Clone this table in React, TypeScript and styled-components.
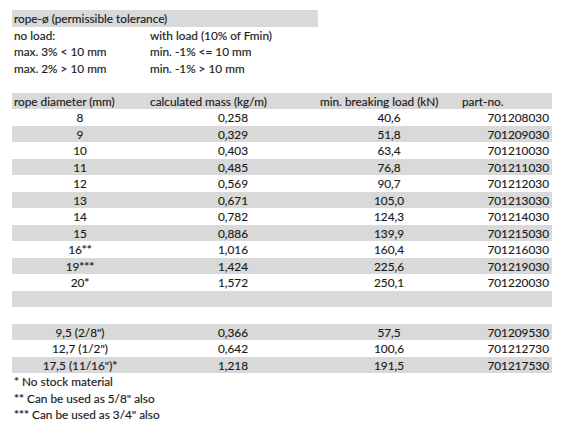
import React from "react";
import styled, { createGlobalStyle } from "styled-components";

const Global = createGlobalStyle`
  html, body { margin: 0; padding: 0; background: #ffffff; }
  body { font-family: Lato, "Open Sans", sans-serif; color: #1a1a1a; }
`;

const Sheet = styled.div`
  padding: 10px 0 0 12px;
  width: 540px;
  display: flex;
  flex-direction: column;
`;

const Row = styled.div<{ $shaded?: boolean; $half?: boolean }>`
  display: grid;
  grid-template-columns: 136px 170px 142px 92px;
  height: 16.5px;
  background: ${(p) => (p.$shaded ? "#d9d9d9" : "transparent")};
  width: ${(p) => (p.$half ? "306px" : "540px")};
`;

const Cell = styled.div<{ $align?: "left" | "center" | "right"; $span?: number }>`
  font-size: 11.8px;
  line-height: 16.5px;
  padding-top: 1px;
  white-space: nowrap;
  text-align: ${(p) => p.$align ?? "left"};
  padding-left: ${(p) => (p.$align === "right" || p.$align === "center" ? "0" : "2px")};
  padding-right: ${(p) => (p.$align === "right" ? "3px" : "0")};
  grid-column: ${(p) => (p.$span ? `span ${p.$span}` : "auto")};
  -webkit-text-stroke: 0.15px #1a1a1a;
`;

type Data = [string, string, string, string];

const main: Data[] = [
  ["8", "0,258", "40,6", "701208030"],
  ["9", "0,329", "51,8", "701209030"],
  ["10", "0,403", "63,4", "701210030"],
  ["11", "0,485", "76,8", "701211030"],
  ["12", "0,569", "90,7", "701212030"],
  ["13", "0,671", "105,0", "701213030"],
  ["14", "0,782", "124,3", "701214030"],
  ["15", "0,886", "139,9", "701215030"],
  ["16**", "1,016", "160,4", "701216030"],
  ["19***", "1,424", "225,6", "701219030"],
  ["20*", "1,572", "250,1", "701220030"],
];

const imperial: Data[] = [
  ["9,5 (2/8\")", "0,366", "57,5", "701209530"],
  ["12,7 (1/2\")", "0,642", "100,6", "701212730"],
  ["17,5 (11/16\")*", "1,218", "191,5", "701217530"],
];

const DataRow = ({ d, shaded }: { d: Data; shaded: boolean }) => (
  <Row $shaded={shaded}>
    <Cell $align="center">{d[0]}</Cell>
    <Cell $align="center">{d[1]}</Cell>
    <Cell $align="center">{d[2]}</Cell>
    <Cell $align="right">{d[3]}</Cell>
  </Row>
);

export default function App() {
  return (
    <>
      <Global />
      <Sheet>
        <Row $shaded $half>
          <Cell $span={2}>rope-ø (permissible tolerance)</Cell>
        </Row>
        <Row>
          <Cell>no load:</Cell>
          <Cell>with load (10% of Fmin)</Cell>
        </Row>
        <Row>
          <Cell>max. 3% &lt; 10 mm</Cell>
          <Cell>min. -1% &lt;= 10 mm</Cell>
        </Row>
        <Row>
          <Cell>max. 2% &gt; 10 mm</Cell>
          <Cell>min. -1% &gt; 10 mm</Cell>
        </Row>
        <Row />
        <Row $shaded>
          <Cell>rope diameter (mm)</Cell>
          <Cell>calculated mass (kg/m)</Cell>
          <Cell>min. breaking load (kN)</Cell>
          <Cell>part-no.</Cell>
        </Row>
        {main.map((d, i) => (
          <DataRow key={d[3]} d={d} shaded={i % 2 === 1} />
        ))}
        <Row $shaded />
        <Row />
        {imperial.map((d, i) => (
          <DataRow key={d[3]} d={d} shaded={i % 2 === 0} />
        ))}
        <Row>
          <Cell $span={2}>* No stock material</Cell>
        </Row>
        <Row>
          <Cell $span={2}>** Can be used as 5/8" also</Cell>
        </Row>
        <Row>
          <Cell $span={2}>*** Can be used as 3/4" also</Cell>
        </Row>
      </Sheet>
    </>
  );
}
